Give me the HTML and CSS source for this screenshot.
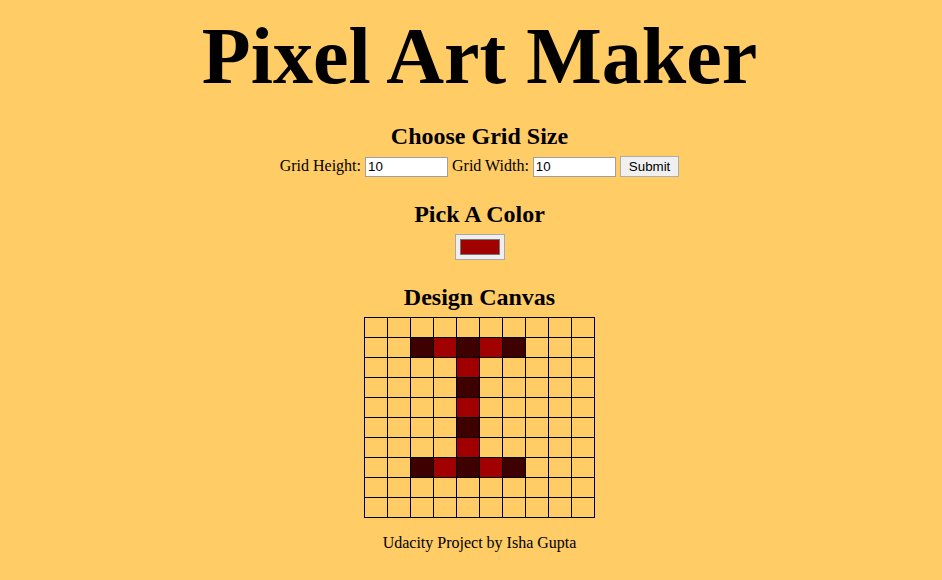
FILE: index.html
```html
<!DOCTYPE html>
<html>
<head>
<meta charset="utf-8">
<title>Pixel Art Maker!</title>
<link rel="stylesheet" href="styles.css">
</head>
<body>
<h1 class="title">Pixel Art Maker</h1>
<h2 class="section first">Choose Grid Size</h2>
<form class="size-picker">
Grid Height:
<input class="num" type="text" value="10">
Grid Width:
<input class="num" type="text" value="10">
<input class="submit" type="submit" value="Submit">
</form>
<h2 class="section">Pick A Color</h2>
<div class="picker-row"><span class="color-picker"><span class="swatch"></span></span></div>
<h2 class="section">Design Canvas</h2>
<table class="canvas">
<tr><td></td><td></td><td></td><td></td><td></td><td></td><td></td><td></td><td></td><td></td></tr>
<tr><td></td><td></td><td class="d"></td><td class="r"></td><td class="d"></td><td class="r"></td><td class="d"></td><td></td><td></td><td></td></tr>
<tr><td></td><td></td><td></td><td></td><td class="r"></td><td></td><td></td><td></td><td></td><td></td></tr>
<tr><td></td><td></td><td></td><td></td><td class="d"></td><td></td><td></td><td></td><td></td><td></td></tr>
<tr><td></td><td></td><td></td><td></td><td class="r"></td><td></td><td></td><td></td><td></td><td></td></tr>
<tr><td></td><td></td><td></td><td></td><td class="d"></td><td></td><td></td><td></td><td></td><td></td></tr>
<tr><td></td><td></td><td></td><td></td><td class="r"></td><td></td><td></td><td></td><td></td><td></td></tr>
<tr><td></td><td></td><td class="d"></td><td class="r"></td><td class="d"></td><td class="r"></td><td class="d"></td><td></td><td></td><td></td></tr>
<tr><td></td><td></td><td></td><td></td><td></td><td></td><td></td><td></td><td></td><td></td></tr>
<tr><td></td><td></td><td></td><td></td><td></td><td></td><td></td><td></td><td></td><td></td></tr>
</table>
<p class="footer">Udacity Project by Isha Gupta</p>
</body>
</html>
```
FILE: styles.css
```css
body {
  margin: 8px 8px 8px 25px;
  text-align: center;
  background: #ffcc66;
  font-family: "Liberation Serif", "Times New Roman", serif;
  font-size: 16px;
  color: #000;
}
.title {
  font-size: 80px;
  margin: 3px 0 21px;
  font-weight: bold;
}
.section {
  font-size: 24px;
  margin: 1em 0 0.25em;
}
.section.first {
  margin-top: 0.5em;
}
.size-picker {
  margin: 0;
}
.num {
  box-sizing: border-box;
  width: 83px;
  height: 20px;
  padding: 1px 2px;
  border: 1px solid #a0a0a0;
  background: #fff;
  font-family: "Liberation Sans", Arial, sans-serif;
  font-size: 13.33px;
  vertical-align: baseline;
}
.submit {
  box-sizing: border-box;
  height: 21px;
  padding: 1px 8px;
  border: 1px solid #adadad;
  background: #f0f0f0;
  font-family: "Liberation Sans", Arial, sans-serif;
  font-size: 13.33px;
  color: #000;
}
.picker-row {
  display: flex;
  justify-content: center;
}
.color-picker {
  box-sizing: border-box;
  width: 50px;
  height: 26px;
  padding: 4px;
  border: 1px solid #a9a9a9;
  background: #efefef;
  display: flex;
}
.swatch {
  flex: 1;
  background: #a00000;
  border: 1px solid #777;
}
.canvas {
  border-collapse: collapse;
  margin: 0 auto;
  border: 1px solid #000;
}
.canvas tr {
  height: 20px;
}
.canvas td {
  width: 20px;
  border: 1px solid #000;
  padding: 1px;
}
.canvas td.r {
  background: #a00000;
}
.canvas td.d {
  background: #3f0000;
}
.footer {
  margin: 16px 0;
}
```
